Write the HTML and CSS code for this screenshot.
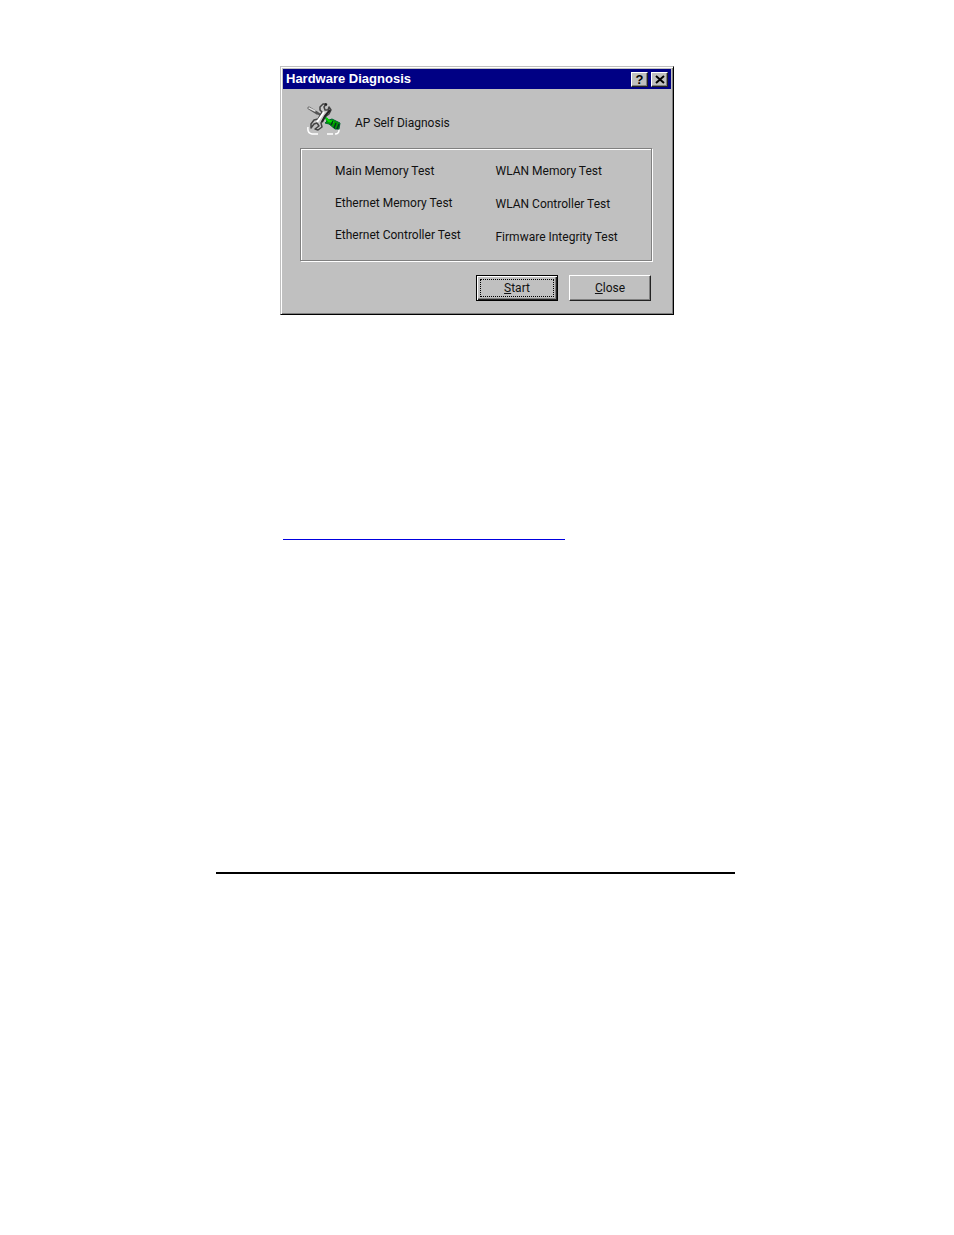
FILE: index.html
```html
<!DOCTYPE html>
<html lang="en">
<head>
  <meta charset="UTF-8">
  <meta name="viewport" content="width=device-width, initial-scale=1.0">
  <title>Hardware Diagnosis</title>
  <link rel="stylesheet" href="styles.css">
</head>
<body>
  <main class="page">
    <!-- Dialog -->
    <section class="dialog">
      <header class="title-bar">
        <h1>Hardware Diagnosis</h1>
        <div class="title-buttons">
          <button type="button" class="title-button">?</button>
          <button type="button" class="title-button" aria-label="Close window">
            <svg width="10" height="9" viewBox="0 0 10 9">
              <path d="M1 1L9 8M9 1L1 8" stroke="#000" stroke-width="2" fill="none"/>
            </svg>
          </button>
        </div>
      </header>

      <div class="dialog-body">
        <div class="heading">
          <!-- Wrench, screwdriver and green handle -->
          <svg class="tools-icon" width="36" height="34" viewBox="0 0 36 34">
            <path d="M1 25Q0 31 5 32L11 32M20 32H26M28 32Q32 32 32 28" stroke="#fff" stroke-width="1.5" fill="none"/>
            <path d="M2 6L10 11" stroke="#555" stroke-width="3" stroke-linecap="round"/>
            <path d="M2 6L8 9" stroke="#ddd" stroke-width="1.5" stroke-linecap="round"/>
            <path d="M10 11L16 14" stroke="#555" stroke-width="2"/>
            <path d="M13 5L16 2L19 2L17 5L18 8L21 8L22 5L24 8L22 12L18 15L14 21L15 25L11 28L8 27L12 24L10 21L7 22L4 26L4 22L7 18L11 17L15 10L13 8Z" fill="#c8c8c8" stroke="#444" stroke-width="1.5" stroke-linejoin="round"/>
            <path d="M17 10L10 20" stroke="#fff" stroke-width="2"/>
            <path d="M18 2L20 3M23 8L18 14L15 20" stroke="#222" stroke-width="2" fill="none"/>
            <path d="M18 15L22 18L25 17L33 21L32 27L28 27L22 22L18 21L20 19Z" fill="#009c00" stroke="#063" stroke-width="1"/>
            <path d="M19 16L22 19L27 20" stroke="#00e000" stroke-width="2" fill="none"/>
            <path d="M26 19L24 23M29 21L27 26M32 22L30 27" stroke="#032" stroke-width="1.5"/>
          </svg>
          <p>AP Self Diagnosis</p>
        </div>

        <div class="tests">
          <ul class="tests-main">
            <li>Main Memory Test</li>
            <li>Ethernet Memory Test</li>
            <li>Ethernet Controller Test</li>
          </ul>
          <ul class="tests-wlan">
            <li>WLAN Memory Test</li>
            <li>WLAN Controller Test</li>
            <li>Firmware Integrity Test</li>
          </ul>
        </div>

        <div class="actions">
          <button type="button" class="button button-default"><span><u>S</u>tart</span></button>
          <button type="button" class="button"><u>C</u>lose</button>
        </div>
      </div>
    </section>

    <hr class="link-line">
    <hr class="footer-line">
  </main>
</body>
</html>
```

FILE: styles.css
```css
* {
  box-sizing: border-box;
}
body {
  margin: 0;
  padding-right: 3px;
  background-color: #fff;
  color: #111;
  font-family: Roboto, "Liberation Sans", sans-serif;
  font-size: 12px;
  line-height: 16px;
}
.page {
  max-width: 519px;
  margin: 0 auto;
  padding-top: 66px;
}
.dialog {
  margin: 0 61px 0 64px;
  padding: 1px;
  background-color: #c0c0c0;
  border: 1px solid #000;
  border-top-color: #c0c0c0;
  border-left-color: #c0c0c0;
  box-shadow: inset 1px 1px #fff, inset -1px -1px #808080;
}
.title-bar {
  display: flex;
  justify-content: space-between;
  align-items: center;
  height: 20px;
  margin: 1px;
  padding: 0 3px;
  background-color: #000084;
  color: #fff;
}
.title-bar h1 {
  margin: 0;
  font-size: 13px;
  font-family: "Liberation Sans", Arial, sans-serif;
  font-weight: bold;
}
.title-buttons {
  display: flex;
  gap: 3px;
}
.title-button {
  display: flex;
  justify-content: center;
  align-items: center;
  width: 17px;
  height: 15px;
  padding: 0;
  background-color: #c0c0c0;
  border: 1px solid #222;
  border-top-color: #fff;
  border-left-color: #fff;
  box-shadow: inset -1px -1px #808080;
  color: #000;
  font-family: "Liberation Sans", Arial, sans-serif;
  font-size: 13px;
  font-weight: bold;
  line-height: 13px;
}
.dialog-body {
  padding: 12px 20px 12px 18px;
}
.heading {
  display: flex;
  align-items: center;
  gap: 12px;
  height: 42px;
  padding-left: 7px;
}
.heading p {
  margin: 0;
}
.tools-icon {
  margin-bottom: 8px;
}
.tests {
  display: grid;
  grid-template-columns: 161fr 156fr;
  margin-top: 4px;
  padding: 14px 0 15px 34px;
  border: 1px solid #808080;
  box-shadow: 1px 1px #fff, inset 1px 1px #fff;
}
.tests ul {
  display: flex;
  flex-direction: column;
  margin: 0;
  padding: 0;
  list-style: none;
}
.tests-main {
  gap: 16px;
}
.tests-wlan {
  gap: 17px;
}
.actions {
  display: flex;
  justify-content: flex-end;
  gap: 11px;
  margin-top: 14px;
  padding-right: 1px;
}
.button {
  width: 82px;
  height: 26px;
  padding: 2px;
  background-color: #c0c0c0;
  border: 1px solid #222;
  border-top-color: #fff;
  border-left-color: #fff;
  box-shadow: inset -1px -1px #808080;
  color: #111;
  font-family: inherit;
  font-size: 12px;
  line-height: 16px;
}
.button-default {
  border: 1px solid #000;
  box-shadow: inset 1px 1px #fff, inset -1px -1px #222, inset -2px -2px #808080;
}
.button-default span {
  display: block;
  margin: 0 1px;
  border: 1px dotted #000;
}
.link-line,
.footer-line {
  margin: 0;
  border: 0;
}
.link-line {
  width: 282px;
  height: 1px;
  margin: 224px 0 0 67px;
  background-color: #0000e0;
}
.footer-line {
  height: 2px;
  margin-top: 332px;
  background-color: #000;
}
```
